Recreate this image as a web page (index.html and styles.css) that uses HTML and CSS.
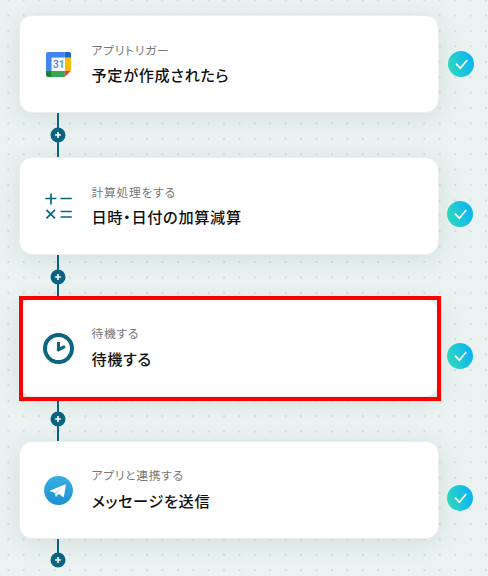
FILE: index.html
```
<!DOCTYPE html>
<html lang="ja">
<head>
  <meta charset="utf-8">
  <title>フロー</title>
  <link rel="stylesheet" href="styles.css">
</head>
<body>
  <svg class="defs" width="0" height="0">
    <defs>
      <linearGradient id="check-bg" x1="0" y1="0.65" x2="1" y2="0.35">
        <stop offset="0" stop-color="#2fd9bd"/>
        <stop offset="0.9" stop-color="#0eb6f0"/>
      </linearGradient>
      <linearGradient id="telegram-bg" x1="0" y1="0" x2="0" y2="1">
        <stop offset="0" stop-color="#37aee2"/>
        <stop offset="1" stop-color="#1e90d2"/>
      </linearGradient>
      <symbol id="check" viewBox="0 0 26 26">
        <circle cx="13" cy="13" r="13" fill="url(#check-bg)"/>
        <path d="M7.9 12.7L12.3 17.2L19.2 9" fill="none" stroke="#fff" stroke-width="1.7"/>
      </symbol>
      <symbol id="plus" viewBox="0 0 16 16">
        <circle cx="8" cy="8" r="7.5" fill="#0b6580"/>
        <path d="M8 5.1v5.8M5.1 8h5.8" stroke="#fff" stroke-width="1.6"/>
      </symbol>
    </defs>
  </svg>

  <div class="flow">
    <div class="step">
      <div class="card">
        <div class="icon">
          <svg width="25" height="25" viewBox="0 0 26 26">
            <path d="M2 0H19.5V6H6V19.5H0V2Q0 0 2 0Z" fill="#4285f4"/>
            <path d="M19.5 0H24Q26 0 26 2V6H19.5Z" fill="#1967d2"/>
            <path d="M19.5 6H26V19.5H19.5Z" fill="#fbbc04"/>
            <path d="M6 19.5H19.5V26H6Z" fill="#34a853"/>
            <path d="M0 19.5H6V26H2Q0 26 0 24Z" fill="#188038"/>
            <path d="M19.5 19.5H26L19.5 26Z" fill="#ea4335"/>
            <path d="M6 6H19.5V19.5H6Z" fill="#fff"/>
            <text class="cal-day" x="13.2" y="17" text-anchor="middle">31</text>
          </svg>
        </div>
        <div class="text">
          <div class="kind">アプリトリガー</div>
          <div class="name">予定が作成されたら</div>
        </div>
      </div>
      <svg class="check check-first"><use href="#check"/></svg>
    </div>
    <div class="connector"><svg class="plus"><use href="#plus"/></svg></div>

    <div class="step">
      <div class="card">
        <div class="icon">
          <svg width="27" height="27" viewBox="0 0 27 27" fill="none" stroke="#0b6580" stroke-width="1.7">
            <path d="M6 0.5v11M0.3 5.5h11M15.5 5.5h11.3"/>
            <path d="M1.4 16.8l8.6 8.6M10 16.8l-8.6 8.6M15.5 18.5h11.3M15.5 24h11.3"/>
          </svg>
        </div>
        <div class="text">
          <div class="kind">計算処理をする</div>
          <div class="name">日時・日付の加算減算</div>
        </div>
      </div>
      <svg class="check"><use href="#check"/></svg>
    </div>
    <div class="connector"><svg class="plus"><use href="#plus"/></svg></div>

    <div class="step">
      <div class="card">
        <div class="icon">
          <svg width="31" height="31" viewBox="0 0 31 31" fill="none" stroke="#0b6580">
            <circle cx="15.5" cy="15.5" r="13.5" stroke-width="4"/>
            <path d="M15.5 9v9M14.2 17.3L22 13.3" stroke-width="3.1"/>
          </svg>
        </div>
        <div class="text text-spread">
          <div class="kind">待機する</div>
          <div class="name">待機する</div>
        </div>
      </div>
      <svg class="check"><use href="#check"/></svg>
      <div class="highlight"></div>
    </div>
    <div class="connector"><svg class="plus"><use href="#plus"/></svg></div>

    <div class="step">
      <div class="card">
        <div class="icon">
          <svg width="29" height="29" viewBox="0 0 29 29">
            <circle cx="14.5" cy="14.5" r="14.4" fill="url(#telegram-bg)"/>
            <path d="M6 14.6L21 8.6Q22 8.3 21.8 9.5L20 20.2Q19.7 21.3 18.6 20.7L14.6 17.8L12.4 20.6L11.8 20.6L10.4 16.4L6 15.2Z" fill="#fff"/>
            <path d="M10.4 16.4L18.5 11.2L12.6 17.1L12 20.6Q11.6 20.6 11.4 20Z" fill="#c8daea"/>
          </svg>
        </div>
        <div class="text text-spread">
          <div class="kind">アプリと連携する</div>
          <div class="name">メッセージを送信</div>
        </div>
      </div>
      <svg class="check"><use href="#check"/></svg>
    </div>
    <div class="connector connector-last"><svg class="plus"><use href="#plus"/></svg></div>
  </div>
</body>
</html>
```
FILE: styles.css
```
body {
  margin: 0;
  height: 576px;
  overflow: hidden;
  background-color: #eaf3f2;
  background-image: conic-gradient(from 270deg at 2px 2px, #d7dddc 90deg, transparent 0);
  background-size: 15.42px 15.42px;
  background-position: 7.4px 14.6px;
  font-family: "Noto Sans CJK JP", sans-serif;
}
.defs {
  position: absolute;
}
.flow {
  padding: 15px 0 0 19px;
}
.step {
  position: relative;
  display: flex;
  align-items: center;
  height: 98px;
}
.card {
  display: flex;
  align-items: center;
  box-sizing: border-box;
  width: 420px;
  height: 98px;
  padding-left: 22px;
  border: 1px solid #eceeee;
  border-radius: 13px;
  background: #fff;
  box-shadow: 0 4px 24px rgba(20, 50, 45, 0.1);
}
.icon {
  display: flex;
  justify-content: center;
  width: 33px;
  padding-top: 1px;
}
.text {
  margin: 0 0 3px 16.5px;
  font-feature-settings: "palt";
}
.kind {
  font-size: 11.8px;
  line-height: 20px;
  letter-spacing: 0.7px;
  color: #777;
}
.name {
  margin-top: 2px;
  font-size: 15.2px;
  font-weight: 500;
  line-height: 24px;
  letter-spacing: 0.65px;
  color: #111;
}
.text-spread {
  margin-bottom: 4px;
}
.text-spread .name {
  margin-top: 3px;
}
.cal-day {
  font: 500 10.5px Roboto, sans-serif;
  fill: #4285f4;
}
.check {
  width: 26px;
  height: 26px;
  margin: 16px 0 0 8px;
}
.check-first {
  margin: 0 0 0 9px;
}
.connector {
  display: flex;
  align-items: center;
  justify-content: center;
  width: 16px;
  height: 44px;
  margin-left: 31px;
  background: linear-gradient(#0b6580, #0b6580) center / 2px 100% no-repeat;
}
.connector-last {
  height: 22px;
  align-items: flex-end;
  background-size: 2px 18px;
  background-position: top;
}
.plus {
  width: 16px;
  height: 16px;
}
.connector-last .plus {
  margin-bottom: -7px;
}
/* red frame around the selected step */
.highlight {
  position: absolute;
  top: -3px;
  left: 0;
  box-sizing: border-box;
  width: 422px;
  height: 105px;
  border: 4px solid #f00;
}
```
